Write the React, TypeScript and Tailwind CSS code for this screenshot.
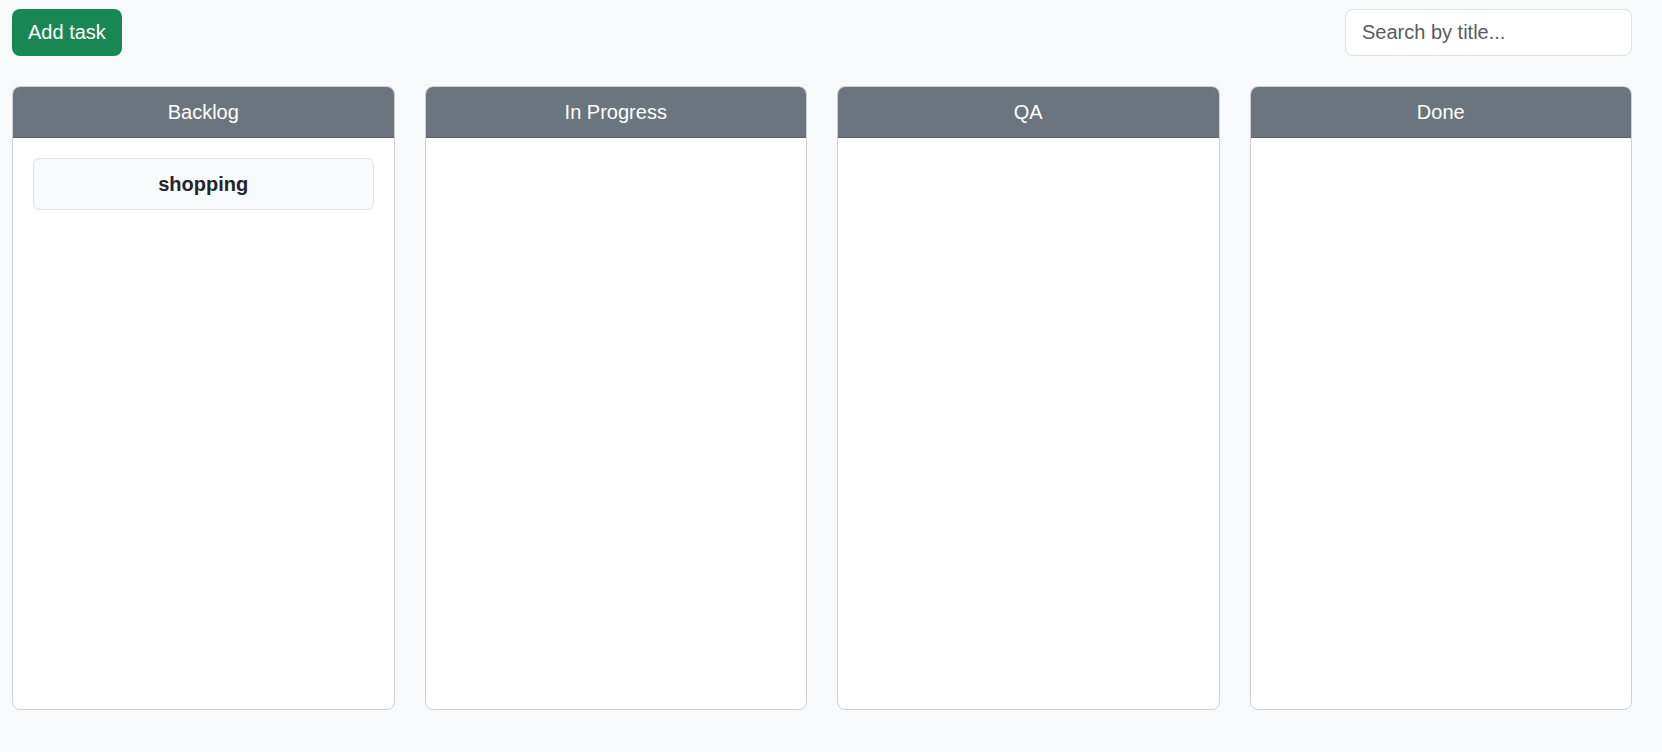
const columns = [
  { name: "Backlog", tasks: ["shopping"] },
  { name: "In Progress", tasks: [] as string[] },
  { name: "QA", tasks: [] as string[] },
  { name: "Done", tasks: [] as string[] },
];

export default function App() {
  return (
    <div
      className="min-h-[752px] bg-[#f8f9fa] text-[#212529]"
      style={{ fontFamily: '"Liberation Sans", Arial, sans-serif' }}
    >
      <div className="pl-3 pr-[30px] pt-[9px]">
        <div className="flex items-center justify-between">
          <button className="h-[47px] rounded-lg bg-[#198754] px-4 pb-[2px] text-[20px] leading-[30px] text-white">
            Add task
          </button>
          <input
            type="text"
            placeholder="Search by title..."
            className="h-[47px] w-[287px] rounded-lg border border-[#dee2e6] bg-white px-4 text-[20px] outline-none placeholder:text-[#595c5f]"
          />
        </div>

        <div className="mt-[30px] grid grid-cols-4 gap-[30px]">
          {columns.map((col) => (
            <div
              key={col.name}
              className="flex h-[624px] flex-col overflow-hidden rounded-lg border border-[#d0d0d0] bg-white"
            >
              <div className="border-b border-[#5a6169] bg-[#6c757d] py-[10px] text-center text-[20px] leading-[30px] text-white">
                {col.name}
              </div>
              <div className="flex flex-col gap-3 p-5">
                {col.tasks.map((t) => (
                  <div
                    key={t}
                    className="rounded-md border border-[#dee2e6] bg-[#f8f9fa] py-[10px] text-center text-[20px] font-bold leading-[30px] text-[#212529]"
                  >
                    {t}
                  </div>
                ))}
              </div>
            </div>
          ))}
        </div>
      </div>
    </div>
  );
}
